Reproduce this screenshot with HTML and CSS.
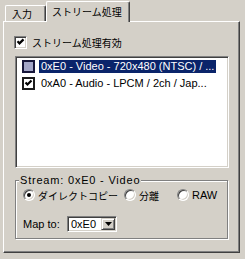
FILE: index.html
```html
<!DOCTYPE html>
<html>
<head>
    <meta http-equiv="Content-Type" content="text/html; charset=utf-8" />
    <title>ストリーム処理</title>
    <link rel="stylesheet" href="styles.css">
</head>
<body>
<div class="tabs">
    <div class="tab"><span class="ja">入力</span></div>
    <div class="tab tab-active"><span class="ja">ストリーム処理</span></div>
</div>
<div class="panel">
    <div class="check-row">
        <span class="check"><svg width="11" height="11" viewBox="0 0 11 11"><path d="M2.5 4.3 L4.5 6.4 L8.5 2.4" fill="none" stroke="#000" stroke-width="2.2"/></svg></span>
        <span class="ja">ストリーム処理有効</span>
    </div>
    <div class="list">
        <div class="item item-selected">
            <span class="item-box"></span>
            <span class="item-text">0xE0 - Video - 720x480 (NTSC) / ...</span>
        </div>
        <div class="item">
            <span class="item-box"><svg width="9" height="9" viewBox="0 0 9 9"><path d="M1.5 3.4 L3.5 5.5 L7.5 1.5" fill="none" stroke="#000" stroke-width="2.2"/></svg></span>
            <span class="item-text">0xA0 - Audio - LPCM / 2ch / Jap...</span>
        </div>
    </div>
    <div class="group">
        <div class="group-title">Stream: 0xE0 - Video</div>
        <div class="radios">
            <span class="opt opt-copy"><span class="radio radio-on"></span><span class="ja">ダイレクトコピー</span></span>
            <span class="opt opt-split"><span class="radio"></span><span class="ja">分離</span></span>
            <span class="opt"><span class="radio"></span><span>RAW</span></span>
        </div>
        <div class="map-row">
            <span class="map-label">Map to:</span>
            <span class="combo">
                <span class="combo-value">0xE0</span>
                <span class="combo-btn"><svg width="7" height="4" viewBox="0 0 7 4"><path d="M0 0 H7 L3.5 4 Z" fill="#000"/></svg></span>
            </span>
        </div>
    </div>
</div>
</body>
</html>
```
FILE: styles.css
```css
*{ margin: 0; padding: 0; box-sizing: border-box;}
body{ width: 245px; height: 259px; overflow: hidden; background: #d4d0c8; color: #000; font-family: "Liberation Sans", "Noto Sans CJK JP", sans-serif; font-size: 11px;}
.ja{ font-family: "Noto Sans CJK JP", sans-serif; font-size: 10px;}

/* tabs */
.tabs{ display: flex; align-items: flex-end; height: 21px; padding-left: 5px;}
.tab{ width: 41px; height: 16px; padding-left: 6px; line-height: 15px; white-space: nowrap; background: #d4d0c8; border: 1px solid #fff; border-bottom: 0; border-right-color: #404040; border-radius: 2px 2px 0 0; box-shadow: inset -1px 0 #808080;}
.tab-active{ width: 84px; height: 21px; margin-bottom: -1px; padding-left: 5px; line-height: 19px; z-index: 1;}

/* page */
.panel{ width: 237px; margin-left: 3px; padding: 0 0 13px 11px; border: 1px solid #fff; border-right-color: #404040; border-bottom-color: #404040; box-shadow: inset -1px -1px #808080;}

.check-row{ display: flex; align-items: center; gap: 5px; height: 13px; margin: 14px 0 0 -1px;}
.check{ display: flex; width: 13px; height: 13px; background: #fff; border: 1px solid; border-color: #808080 #fff #fff #808080; box-shadow: inset 1px 1px #404040, inset -1px -1px #d4d0c8;}

.list{ width: 214px; height: 112px; margin-top: 7px; padding: 1px 0 0 6px; background: #fff; border: 1px solid; border-color: #808080 #fff #fff #808080; box-shadow: inset 1px 1px #404040, inset -1px -1px #d4d0c8;}
.item{ display: flex; align-items: center; height: 17px;}
.item-box{ display: flex; width: 13px; height: 13px; background: #fff; border: 2px solid #1c1c1c;}
.item-text{ margin-left: 4px; padding: 0 2px; line-height: 13px; white-space: nowrap;}
.item-selected .item-box{ background: #a3a6c8; border-color: #16163a;}
.item-selected .item-text{ background: #0a246a; color: #fff;}

/* group box */
.group{ width: 213px; height: 59px; margin-top: 12px; padding-left: 7px; border: 1px solid #808080; box-shadow: inset 1px 1px #fff, 1px 1px #fff;}
.group-title{ display: table; margin: -7px 0 0 -4px; padding: 0 1px; line-height: 13px; letter-spacing: 0.8px; background: #d4d0c8;}

.radios{ display: flex; align-items: center; height: 14px; margin-top: 1px;}
.opt{ display: flex; align-items: center; gap: 3px; white-space: nowrap;}
.opt-copy{ width: 101px;}
.opt-split{ width: 53px;}
.radio{ display: flex; align-items: center; justify-content: center; width: 12px; height: 12px; background: #fff; border: 1px solid; border-color: #808080 #fff #fff #808080; border-radius: 50%; box-shadow: inset 1px 1px #404040, inset -1px -1px #d4d0c8;}
.radio-on::after{ content: ""; width: 4px; height: 4px; border-radius: 50%; background: #000;}

.map-row{ display: flex; align-items: center; height: 16px; margin-top: 14px;}
.map-label{ width: 44px;}
.combo{ display: flex; width: 50px; height: 16px; padding: 1px; background: #fff; border: 1px solid; border-color: #808080 #fff #fff #808080; box-shadow: inset 1px 1px #404040, inset -1px -1px #d4d0c8;}
.combo-value{ flex: 1; padding-left: 2px; line-height: 12px;}
.combo-btn{ display: flex; align-items: center; justify-content: center; width: 14px; height: 12px; background: #d4d0c8; border: 1px solid; border-color: #d4d0c8 #404040 #404040 #d4d0c8; box-shadow: inset 1px 1px #fff, inset -1px -1px #808080;}
```
